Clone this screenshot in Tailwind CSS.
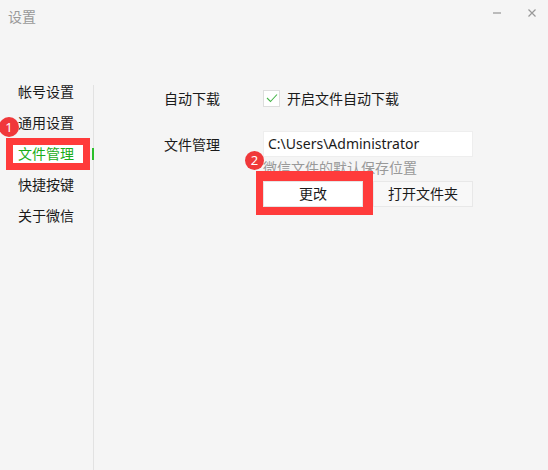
<!DOCTYPE html>
<html lang="zh-CN">
<head>
<meta charset="UTF-8">
<title>设置</title>
<script src="https://cdn.jsdelivr.net/npm/@tailwindcss/browser@4"></script>
</head>
<body class="bg-[#f5f5f5] font-['Noto_Sans','Noto_Sans_CJK_SC',sans-serif] text-[14px] text-[#1a1a1a]">
<div class="relative w-[548px] h-[470px] overflow-hidden flex flex-col">
  <!-- title bar -->
  <div class="h-[85px] flex justify-between shrink-0">
    <div class="pl-[8px] pt-[7px] leading-[20px] text-[#999]">设置</div>
    <div class="flex gap-[25px] pt-[7px] pr-[11px] items-start">
      <svg width="10" height="12" viewBox="0 0 10 12"><rect x="1" y="5" width="8" height="2" fill="#bbb"/></svg>
      <svg width="10" height="12" viewBox="0 0 10 12"><path d="M1.5 2.5l7 7M8.5 2.5l-7 7" stroke="#999" stroke-width="1.2" fill="none"/></svg>
    </div>
  </div>

  <div class="flex flex-1">
    <!-- sidebar -->
    <div class="w-[94px] border-r border-[#e2e2e2] relative shrink-0">
      <ul class="pl-[18px] leading-[31px] -mt-[9px]">
        <li class="h-[31px]">帐号设置</li>
        <li class="h-[31px]">通用设置</li>
        <li class="h-[31px] flex items-center">
          <div class="-ml-[5px] pl-[5px] w-[70px] h-[18px] leading-[18px] bg-white text-[#1aad19]">文件管理</div>
        </li>
        <li class="h-[31px]">快捷按键</li>
        <li class="h-[31px]">关于微信</li>
      </ul>
      <div class="absolute left-[92px] top-[63px] w-[2px] h-[12px] bg-[#2bc02b]"></div>
    </div>

    <!-- content -->
    <div class="pl-[70px] flex-1">
      <div class="flex items-center h-[16px] mt-[5px]">
        <div class="w-[99px]">自动下载</div>
        <div class="w-[17px] h-[17px] bg-white border border-[#ddd] flex items-center justify-center">
          <svg width="12" height="10" viewBox="0 0 12 10"><path d="M1 5l3.5 3.5L11 1.5" stroke="#46b549" stroke-width="1.1" fill="none"/></svg>
        </div>
        <div class="ml-[7px]">开启文件自动下载</div>
      </div>

      <div class="flex mt-[25px]">
        <div class="w-[99px] leading-[28px]">文件管理</div>
        <div class="w-[210px]">
          <div class="h-[26px] bg-white border border-[#eee] pl-[4px] leading-[24px] text-[14px]">C:\Users\Administrator</div>
          <div class="text-[#999] leading-[20px] mt-[1px]">微信文件的默认保存位置</div>
          <div class="flex justify-between mt-[3px]">
            <div class="w-[100px] h-[26px] bg-white border border-[#e5e5e5] text-center leading-[24px]">更改</div>
            <div class="w-[100px] h-[26px] bg-[#f8f8f8] border border-[#e8e8e8] text-center leading-[24px]">打开文件夹</div>
          </div>
        </div>
      </div>
    </div>
  </div>

  <!-- annotations -->
  <div class="absolute left-[6px] top-[138px] w-[84px] h-[32px] border-[7px] border-[#ff3b3b]"></div>
  <div class="absolute left-[256px] top-[171px] w-[117px] h-[44px] border-[#ff3b3b] border-l-[7px] border-r-[10px] border-t-[10px] border-b-[8px]"></div>
  <div class="absolute left-[-1px] top-[117px] w-[20px] h-[20px] rounded-full bg-[#f0383a] text-white text-[13px] leading-[20px] text-center">1</div>
  <div class="absolute left-[245px] top-[151px] w-[19px] h-[19px] rounded-full bg-[#f0383a] text-white text-[13px] leading-[19px] text-center">2</div>
</div>
</body>
</html>
